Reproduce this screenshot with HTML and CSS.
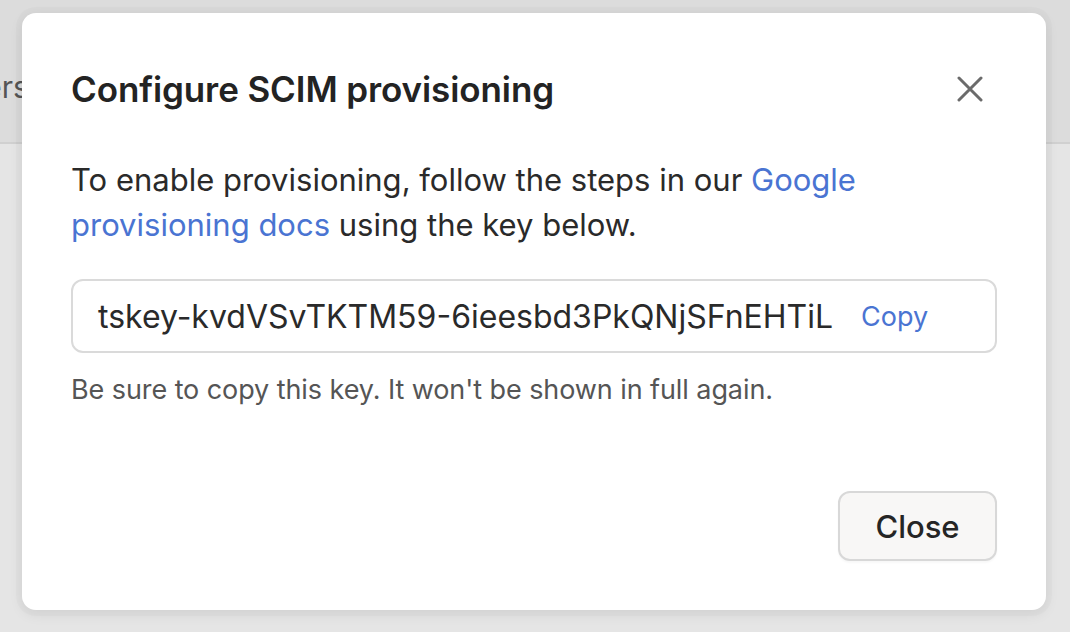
FILE: index.html
```html
<!DOCTYPE html>
<html>
<head>
<meta charset="utf-8">
<link rel="stylesheet" href="styles.css">
</head>
<body>
<div class="page">
  <header class="topbar">
    <span class="nav-item">Users</span>
  </header>
  <main class="content"></main>
</div>
<div class="overlay">
  <div class="modal" role="dialog">
    <div class="modal-head">
      <h2 class="modal-title">Configure SCIM provisioning</h2>
      <button class="icon-btn" aria-label="Close">
        <svg width="26" height="26" viewBox="0 0 26 26"><path d="M2 2 L24 24 M24 2 L2 24" stroke="#6b6b6b" stroke-width="3" stroke-linecap="round" fill="none"/></svg>
      </button>
    </div>
    <p class="modal-text">To enable provisioning, follow the steps in our <a class="link" href="#">Google provisioning docs</a> using the key below.</p>
    <div class="key-box">
      <span class="key">tskey-kvdVSvTKTM59-6ieesbd3PkQNjSFnEHTiL</span>
      <a class="copy" href="#">Copy</a>
    </div>
    <p class="hint">Be sure to copy this key. It won't be shown in full again.</p>
    <div class="modal-foot">
      <button class="btn">Close</button>
    </div>
  </div>
</div>
</body>
</html>
```
FILE: styles.css
```css
* { box-sizing: border-box; }
html, body { margin: 0; padding: 0; }
body {
  width: 1070px;
  height: 632px;
  overflow: hidden;
  font-family: Inter, "Liberation Sans", sans-serif;
  background: #e4e4e4;
  position: relative;
}
.page { display: flex; flex-direction: column; height: 100%; }
.topbar {
  height: 144px;
  background: #dcdcdc;
  border-bottom: 2px solid #d0d0d0;
  display: flex;
  align-items: center;
  padding-top: 32px;
}
.nav-item {
  font-size: 30px;
  color: #555;
  margin-left: -54px;
}
.content { flex: 1; background: #e5e5e5; }
.overlay {
  position: absolute;
  inset: 0;
  display: flex;
  justify-content: center;
  align-items: flex-start;
  padding-top: 13px;
  padding-right: 2px;
}
.modal {
  width: 1024px;
  height: 597px;
  background: #fff;
  border-radius: 14px;
  box-shadow: 0 0 0 6px rgba(0,0,0,0.015), 0 4px 14px rgba(0,0,0,0.08);
  padding: 48px 49px 49px 49px;
  display: flex;
  flex-direction: column;
}
.modal-head {
  display: flex;
  align-items: center;
  justify-content: space-between;
  height: 56px;
}
.modal-title {
  margin: 0;
  font-size: 35px;
  font-weight: 600;
  color: #232323;
  letter-spacing: -0.1px;
}
.icon-btn {
  border: none;
  background: none;
  padding: 0;
  width: 26px;
  height: 26px;
  margin-right: 14px;
  display: flex;
}
.modal-text {
  margin: 40px 0 0 0;
  font-size: 31px;
  line-height: 45px;
  color: #2a2a2a;
}
.link, .copy { color: #4a74d2; text-decoration: none; }
.key-box {
  margin-top: 32px;
  height: 74px;
  border: 2px solid #dadada;
  border-radius: 12px;
  display: flex;
  align-items: center;
  padding-left: 25px;
  gap: 28px;
}
.key { font-size: 32px; color: #2a2a2a; }
.copy { font-size: 27px; }
.hint {
  margin: 18px 0 0 0;
  font-size: 27px;
  letter-spacing: -0.08px;
  line-height: 38px;
  color: #555;
}
.modal-foot {
  margin-top: auto;
  display: flex;
  justify-content: flex-end;
}
.btn {
  width: 159px;
  height: 70px;
  background: #f8f7f6;
  border: 2px solid #d8d8d8;
  border-radius: 12px;
  font-family: inherit;
  font-size: 31px;
  font-weight: 500;
  color: #252525;
  box-shadow: 0 2px 2px rgba(0,0,0,0.03);
}
```
